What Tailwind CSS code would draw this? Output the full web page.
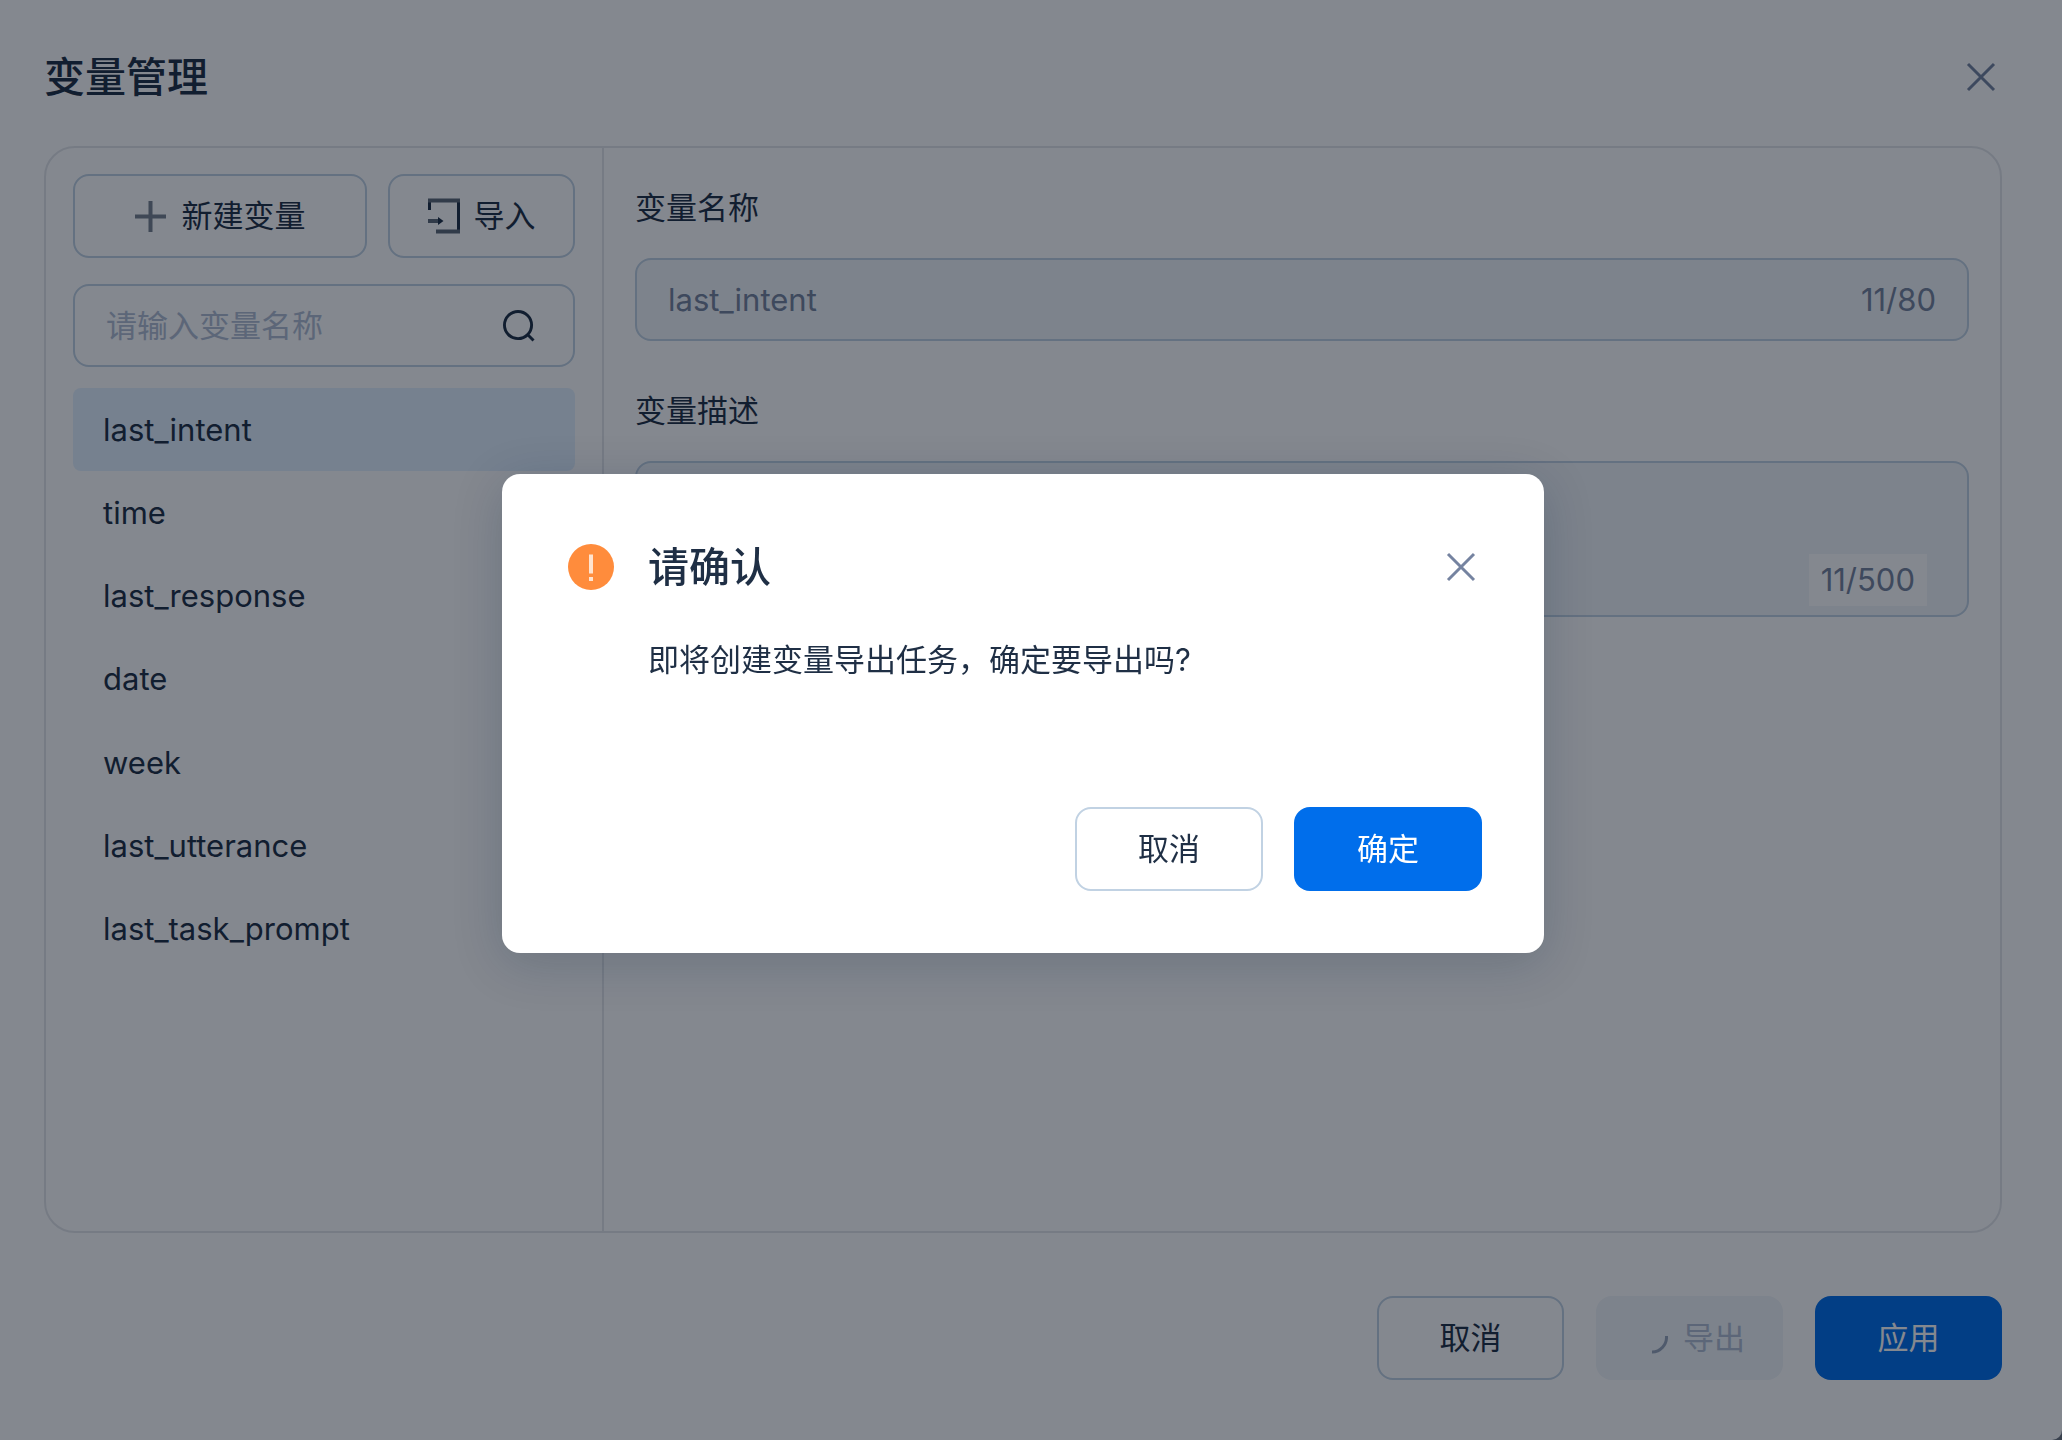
<!DOCTYPE html>
<html lang="zh-CN">
<head>
<meta charset="utf-8">
<title>变量管理</title>
<script src="https://cdn.jsdelivr.net/npm/@tailwindcss/browser@4"></script>
</head>
<body class="min-h-screen bg-[#6c7480] font-['Inter','Noto_Sans_CJK_SC',sans-serif] text-[31px] leading-[44px] text-[#1f2f45]">
  <main class="flex min-h-screen flex-col rounded-br-[10px] bg-white pb-[60px] pl-[44px] pr-[60px]">
    <header class="flex h-[146px] items-center justify-between pt-2">
      <h1 class="text-[41px] leading-[56px] font-medium">变量管理</h1>
      <button type="button" aria-label="关闭" class="flex size-[42px] items-center justify-center text-[#7583a0]">
        <svg class="size-[30px]" viewBox="0 0 30 30" fill="none" stroke="currentColor" stroke-width="3"><path d="M2 2 28 28M28 2 2 28"/></svg>
      </button>
    </header>

    <div class="flex flex-1 rounded-[31px] border-2 border-[#e4e6ea]">
      <aside class="w-[558px] border-r-2 border-[#e4e6ea] px-[27px] pt-[26px]">
        <div class="flex gap-[21px]">
          <button type="button" class="flex h-[84px] flex-1 items-center justify-center gap-[16px] rounded-[16px] border-2 border-[#c1d2e3]">
            <svg class="size-[31px] text-[#79828f]" viewBox="0 0 31 31" fill="none" stroke="currentColor" stroke-width="4"><path d="M15.500 0V31M0 15.500H31"/></svg>
            新建变量
          </button>
          <button type="button" class="flex h-[84px] w-[187px] items-center justify-center gap-[14px] rounded-[16px] border-2 border-[#c1d2e3]">
            <svg class="h-[36px] w-[32px]" viewBox="0 0 32 36" fill="none" stroke="currentColor" stroke-width="3"><path d="M1.500 12V1M30.500 1V35"/><path d="M0 2.500H32M8 33.500H32M0 23H12" stroke="#5d6877" stroke-width="4"/><path d="M10 19 15.500 23 10 27Z" fill="currentColor" stroke="none"/></svg>
            导入
          </button>
        </div>
        <div class="mt-[26px] flex h-[83px] items-center rounded-[16px] border-2 border-[#c1d2e3] pl-[31px] pr-[38px]">
          <input type="text" aria-label="变量名称搜索" placeholder="请输入变量名称" class="min-w-0 flex-1 outline-none placeholder:text-[#b0bdd2]">
          <svg class="size-[32px]" viewBox="0 0 33 33" fill="none" stroke="currentColor" stroke-width="3"><circle cx="15.500" cy="15.500" r="14"/><path d="M25 25 31.500 31.500"/></svg>
        </div>
        <ul class="mt-[21px] grid h-[583px] grid-rows-7">
          <li class="flex items-center rounded-[8px] bg-[#e3f1ff] px-[30px]">last_intent</li>
          <li class="flex items-center px-[30px]">time</li>
          <li class="flex items-center px-[30px]">last_response</li>
          <li class="flex items-center px-[30px]">date</li>
          <li class="flex items-center px-[30px]">week</li>
          <li class="flex items-center px-[30px]">last_utterance</li>
          <li class="flex items-center px-[30px]">last_task_prompt</li>
        </ul>
      </aside>

      <section class="min-w-0 flex-1 px-[31px] pt-[38px]">
        <label for="name" class="block">变量名称</label>
        <div class="mt-7 flex h-[83px] items-center rounded-[16px] border-2 border-[#c1d2e3] bg-[#f1f5f9] px-[31px] text-[#76839d]">
          <input id="name" type="text" disabled value="last_intent" class="min-w-0 flex-1">
          <span>11/80</span>
        </div>
        <label for="desc" class="mt-12 block">变量描述</label>
        <div class="relative mt-7 h-[156px]">
          <textarea id="desc" disabled class="block size-full resize-none rounded-[16px] border-2 border-[#c1d2e3] bg-[#f1f5f9] px-[31px] py-4"></textarea>
          <span class="absolute right-[42px] bottom-[11px] bg-white px-3 py-1 text-[#76839d]">11/500</span>
        </div>
      </section>
    </div>

    <footer class="mt-[63px] flex justify-end gap-8">
      <button type="button" class="h-[84px] w-[187px] rounded-[16px] border-2 border-[#c1d2e3]">取消</button>
      <button type="button" disabled class="flex h-[84px] w-[187px] items-center justify-center gap-[15px] rounded-[16px] bg-[#f1f5f9] text-[#b0bdd2]">
        <svg class="size-[34px] text-[#98a5bb]" viewBox="0 0 34 34" fill="none" stroke="currentColor" stroke-width="3"><path d="M32.500 15A14.500 15 0 0 1 18 31"/></svg>
        导出
      </button>
      <button type="button" class="h-[84px] w-[187px] rounded-[16px] bg-[#006eeb] text-white">应用</button>
    </footer>
  </main>

  <div class="fixed inset-0 flex items-center justify-center bg-[#040c1a]/49 pb-[14px] pr-4">
    <div role="dialog" aria-modal="true" aria-labelledby="confirm-title" class="flex h-[479px] w-[1042px] flex-col rounded-[18px] bg-white p-[62px] shadow-[0_10px_50px_rgba(10,30,60,0.2)]">
      <div class="flex items-center pt-[3px]">
        <svg class="mx-1 size-[46px]" viewBox="0 0 46 46"><circle cx="23" cy="23" r="23" fill="#ff8c3c"/><path d="M21 10.500h4v19h-4zM21 33h4v4h-4z" fill="#ffe3cf"/></svg>
        <h2 id="confirm-title" class="ml-[30px] flex-1 text-[41px] leading-[56px] font-medium">请确认</h2>
        <button type="button" aria-label="关闭" class="flex size-[42px] items-center justify-center text-[#7583a0]">
          <svg class="size-[30px]" viewBox="0 0 30 30" fill="none" stroke="currentColor" stroke-width="3"><path d="M2 2 28 28M28 2 2 28"/></svg>
        </button>
      </div>
      <p class="mt-[43px] pl-[84px]">即将创建变量导出任务，确定要导出吗?</p>
      <div class="mt-auto flex justify-end gap-[31px]">
        <button type="button" class="h-[84px] w-[188px] rounded-[16px] border-2 border-[#c1d2e3]">取消</button>
        <button type="button" class="h-[84px] w-[188px] rounded-[16px] bg-[#006eeb] text-white">确定</button>
      </div>
    </div>
  </div>
</body>
</html>
